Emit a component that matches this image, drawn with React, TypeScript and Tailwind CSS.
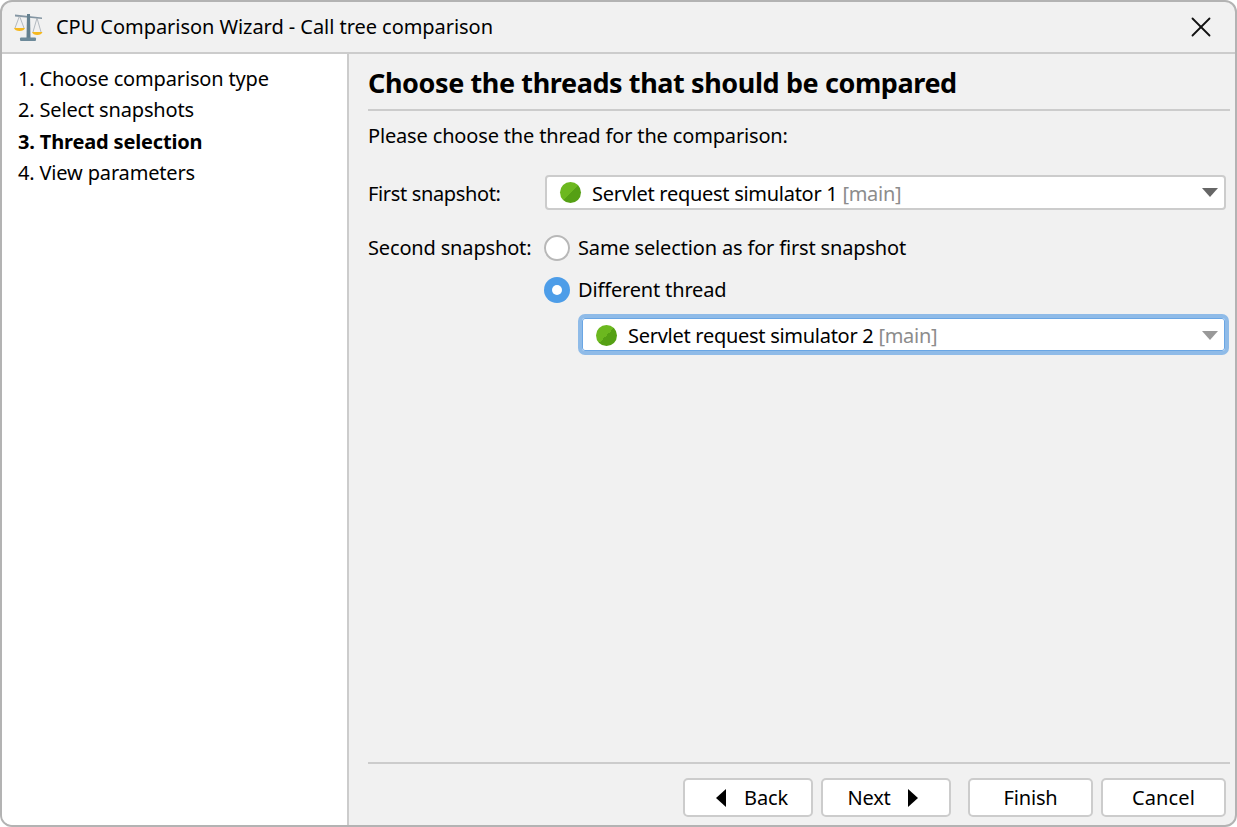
import { X } from "lucide-react";

function Scales() {
  return (
    <svg width="30" height="30" viewBox="0 0 30 30">
      <path d="M1 2.5 L28 5.5 L28 7 L1 4.5 Z" fill="#8496a3" />
      <path d="M13 2 H16 L16.5 26 H12.5 Z" fill="#64808f" />
      <rect x="6" y="25.5" width="16" height="3.5" rx="1" fill="#6d8a9a" />
      <path d="M5.5 4 L1 16 M5.5 4 L10 16 M23 6 L19 20 M23 6 L27 20" stroke="#a2abb2" strokeWidth="0.8" fill="none" />
      <path d="M0 16 H11 Q10 19 5.5 19 Q1 19 0 16 Z" fill="#f5b81f" />
      <path d="M18 20 H28.5 Q27.5 23 23.2 23 Q19 23 18 20 Z" fill="#f5b81f" />
    </svg>
  );
}

function ThreadDot() {
  return (
    <span className="h-[21px] w-[21px] shrink-0 rounded-full bg-[linear-gradient(135deg,#6cb81f_50%,#55a014_50%)]" />
  );
}

function Combo({ label, focused }: { label: string; focused?: boolean }) {
  return (
    <div
      className={
        focused
          ? "flex h-[41px] items-center rounded-[7px] border-[4px] border-[#8fbbe8] bg-white pl-[14px] pr-[7px] pt-[1px] outline outline-1 -outline-offset-5 outline-[#6aa6e4]"
          : "flex h-[35px] items-center rounded-[4px] border-2 border-[#cccccc] bg-white pl-[13px] pr-[6px]"
      }
    >
      <ThreadDot />
      <span className="ml-[11px] flex-1 whitespace-nowrap pt-[2px] tracking-[-0.28px]">
        {label} <span className="text-[#8c8c8c]">[main]</span>
      </span>
      <span
        className={
          focused
            ? "h-0 w-0 border-x-[8px] border-t-[9px] border-x-transparent border-t-[#999999]"
            : "h-0 w-0 border-x-[8px] border-t-[9px] border-x-transparent border-t-[#666666]"
        }
      />
    </div>
  );
}

function WizardButton({ children, className }: { children: React.ReactNode; className: string }) {
  return (
    <button
      className={`flex h-[39px] items-center justify-center rounded-[5px] border-2 border-[#cccccc] bg-white ${className}`}
    >
      {children}
    </button>
  );
}

export default function App() {
  return (
    <div className="h-[827px] w-[1237px] bg-white font-['Noto_Sans',sans-serif] text-[20px] leading-[28px] tracking-[-0.16px] text-black">
      <div className="flex h-full flex-col overflow-hidden rounded-[12px] border-2 border-[#b3b3b3] bg-[#f1f1f1]">
        <div className="flex h-[52px] shrink-0 items-center border-b-2 border-[#cccccc] pl-[12px] pr-[17px]">
          <Scales />
          <span className="ml-[12px] flex-1 tracking-[-0.05px]">CPU Comparison Wizard - Call tree comparison</span>
          <X size={34} strokeWidth={1.3} className="text-[#111111]" />
        </div>
        <div className="flex min-h-0 flex-1">
          <div className="w-[347px] shrink-0 border-r-2 border-[#cccccc] bg-white pl-[16px] pt-[11px]">
            <div className="flex flex-col gap-[3.4px]">
              <div>1. Choose comparison type</div>
              <div>2. Select snapshots</div>
              <div className="font-bold">3. Thread selection</div>
              <div>4. View parameters</div>
            </div>
          </div>
          <div className="flex min-w-0 flex-1 flex-col pl-[19px] pr-[5px]">
            <div className="border-b-2 border-[#cccccc] pb-[7px] pt-[10px] text-[27px] leading-[38px] font-bold tracking-[-0.4px]">
              Choose the threads that should be compared
            </div>
            <div className="mt-[11px]">Please choose the thread for the comparison:</div>
            <div className="mt-[25px] grid grid-cols-[177px_1fr] items-center">
              <div className="pt-[2px] tracking-[-0.35px]">First snapshot:</div>
              <div className="mr-[4px]">
                <Combo label="Servlet request simulator 1" />
              </div>
            </div>
            <div className="mt-[24px] grid grid-cols-[177px_1fr]">
              <div className="leading-[28px]">Second snapshot:</div>
              <div className="flex flex-col">
                <label className="-ml-[1px] flex h-[28px] items-center gap-[8px]">
                  <span className="h-[26px] w-[26px] rounded-full border-2 border-[#b8b8b8] bg-white" />
                  <span>Same selection as for first snapshot</span>
                </label>
                <label className="-ml-[1px] mt-[14px] flex h-[28px] items-center gap-[8px]">
                  <span className="flex h-[26px] w-[26px] items-center justify-center rounded-full bg-[#4d9de8]">
                    <span className="h-[10px] w-[10px] rounded-full bg-white" />
                  </span>
                  <span>Different thread</span>
                </label>
                <div className="ml-[33px] mr-[1px] mt-[10px]">
                  <Combo label="Servlet request simulator 2" focused />
                </div>
              </div>
            </div>
            <div className="mt-auto border-t-2 border-[#cccccc] pb-[8px] pt-[14px]">
              <div className="mr-[4px] flex justify-end">
                <WizardButton className="w-[130px] gap-[18px] pl-[8px]">
                  <span className="h-0 w-0 border-y-[9px] border-r-[10px] border-y-transparent border-r-black" />
                  Back
                </WizardButton>
                <WizardButton className="ml-[8px] w-[130px] gap-[17px] pr-[7px]">
                  Next
                  <span className="h-0 w-0 border-y-[9px] border-l-[10px] border-y-transparent border-l-black" />
                </WizardButton>
                <WizardButton className="ml-[17px] w-[125px]">Finish</WizardButton>
                <WizardButton className="ml-[8px] w-[125px] tracking-[0.1px]">Cancel</WizardButton>
              </div>
            </div>
          </div>
        </div>
      </div>
    </div>
  );
}
